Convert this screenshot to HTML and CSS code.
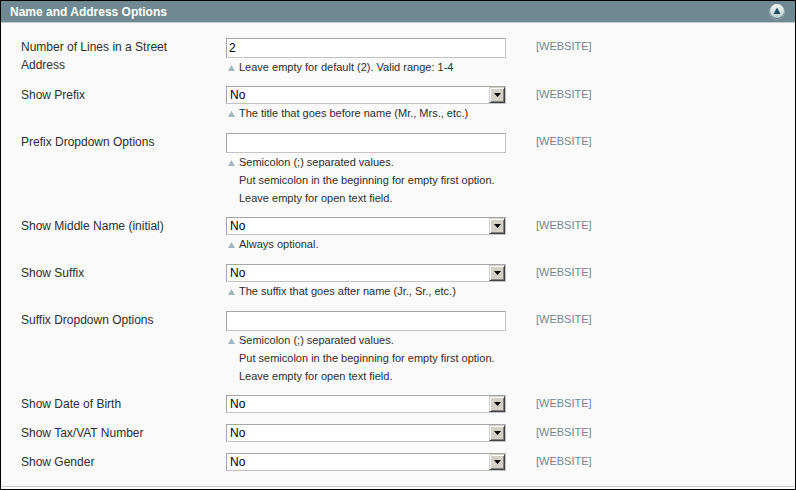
FILE: index.html
```
<!DOCTYPE html>
<html lang="en">
<head>
<meta charset="utf-8">
<title>Name and Address Options</title>
<link rel="stylesheet" href="styles.css">
</head>
<body>
<section class="panel">
  <header class="panel-head">
    <h1>Name and Address Options</h1>
    <button class="collapse" type="button" aria-label="Collapse">
      <svg width="16" height="17" viewBox="0 0 16 17" aria-hidden="true">
        <defs>
          <linearGradient id="disc" x1="0" y1="0" x2="0" y2="1">
            <stop offset="0" stop-color="#f4f8f8"/>
            <stop offset="1" stop-color="#b9cccf"/>
          </linearGradient>
        </defs>
        <circle cx="8" cy="9" r="7.500" fill="#5d7980" stroke="#94aab0" stroke-width="1"/>
        <circle cx="8" cy="8" r="7" fill="url(#disc)"/>
        <path d="M8 4.500L11.5 11H4.500Z" fill="#1d4f5d"/>
      </svg>
    </button>
  </header>
  <form class="fields">
    <div class="row text-row">
      <label for="lines">Number of Lines in a Street Address</label>
      <div class="value">
        <input id="lines" type="text" value="2">
        <p class="note">Leave empty for default (2). Valid range: 1-4</p>
      </div>
      <span class="scope">[WEBSITE]</span>
    </div>
    <div class="row">
      <label for="prefix">Show Prefix</label>
      <div class="value">
        <div class="drop"><select id="prefix"><option>No</option></select></div>
        <p class="note">The title that goes before name (Mr., Mrs., etc.)</p>
      </div>
      <span class="scope">[WEBSITE]</span>
    </div>
    <div class="row text-row">
      <label for="prefix-options">Prefix Dropdown Options</label>
      <div class="value">
        <input id="prefix-options" type="text">
        <p class="note">Semicolon (;) separated values.<br>Put semicolon in the beginning for empty first option.<br>Leave empty for open text field.</p>
      </div>
      <span class="scope">[WEBSITE]</span>
    </div>
    <div class="row">
      <label for="middle">Show Middle Name (initial)</label>
      <div class="value">
        <div class="drop"><select id="middle"><option>No</option></select></div>
        <p class="note">Always optional.</p>
      </div>
      <span class="scope">[WEBSITE]</span>
    </div>
    <div class="row">
      <label for="suffix">Show Suffix</label>
      <div class="value">
        <div class="drop"><select id="suffix"><option>No</option></select></div>
        <p class="note">The suffix that goes after name (Jr., Sr., etc.)</p>
      </div>
      <span class="scope">[WEBSITE]</span>
    </div>
    <div class="row text-row">
      <label for="suffix-options">Suffix Dropdown Options</label>
      <div class="value">
        <input id="suffix-options" type="text">
        <p class="note">Semicolon (;) separated values.<br>Put semicolon in the beginning for empty first option.<br>Leave empty for open text field.</p>
      </div>
      <span class="scope">[WEBSITE]</span>
    </div>
    <div class="row">
      <label for="dob">Show Date of Birth</label>
      <div class="value">
        <div class="drop"><select id="dob"><option>No</option></select></div>
      </div>
      <span class="scope">[WEBSITE]</span>
    </div>
    <div class="row">
      <label for="tax">Show Tax/VAT Number</label>
      <div class="value">
        <div class="drop"><select id="tax"><option>No</option></select></div>
      </div>
      <span class="scope">[WEBSITE]</span>
    </div>
    <div class="row">
      <label for="gender">Show Gender</label>
      <div class="value">
        <div class="drop"><select id="gender"><option>No</option></select></div>
      </div>
      <span class="scope">[WEBSITE]</span>
    </div>
  </form>
</section>
</body>
</html>
```
FILE: styles.css
```
*,
*::before,
*::after {
  box-sizing: border-box;
}

body {
  margin: 0;
  background: #fff;
  color: #2f2f2f;
  font: 12px/18px "Liberation Sans", Arial, sans-serif;
}

.panel {
  border: 1px solid #000;
  padding-bottom: 2px;
}

.panel-head {
  display: flex;
  align-items: center;
  justify-content: space-between;
  height: 22px;
  padding: 0 10px 0 9px;
  background: #6f8992;
  border-bottom: 1px solid #c5cccf;
}

.panel-head h1 {
  margin: 0;
  color: #fff;
  font-size: 12px;
  line-height: 18px;
}

.collapse {
  display: block;
  padding: 0;
  border: 0;
  background: none;
}

.collapse svg {
  display: block;
  overflow: visible;
}

.fields {
  padding: 15px 20px 4px;
  background: #fafafa;
  border-bottom: 1px solid #ccc;
}

.row {
  display: grid;
  grid-template-columns: 175px 280px 1fr;
  column-gap: 30px;
  align-items: start;
  padding-bottom: 11px;
}

.text-row {
  padding-bottom: 10px;
}

.scope {
  color: #6f8992;
  font-size: 11px;
  line-height: 16px;
}

input,
select {
  display: block;
  width: 100%;
  margin: 0;
  border: 1px solid;
  border-color: #a5a5a5 #c3c3c3 #c3c3c3 #a5a5a5;
  border-radius: 0;
  background: #fff;
  color: #000;
  font: 12px/16px "Liberation Sans", Arial, sans-serif;
}

input {
  height: 20px;
  padding: 0 2px;
}

select {
  height: 18px;
  padding: 0 16px 0 3px;
  appearance: none;
}

.drop {
  position: relative;
}

.drop::before,
.drop::after {
  content: "";
  position: absolute;
  pointer-events: none;
}

.drop::before {
  top: 1px;
  right: 1px;
  width: 16px;
  height: 16px;
  background: #d4d0c8;
  border: 1px solid;
  border-color: #d4d0c8 #404040 #404040 #d4d0c8;
  box-shadow: inset 1px 1px #fff, inset -1px -1px #808080;
}

.drop::after {
  top: 7px;
  right: 5px;
  width: 7px;
  height: 4px;
  background: #000;
  clip-path: polygon(0 0, 100% 0, 50% 100%);
}

.note {
  position: relative;
  margin: 0;
  padding-left: 13px;
  font-size: 11px;
}

.note::before {
  content: "";
  position: absolute;
  top: 7px;
  left: 2px;
  width: 7px;
  height: 6px;
  background: #a3b7be;
  clip-path: polygon(50% 0, 100% 100%, 0 100%);
}
```
